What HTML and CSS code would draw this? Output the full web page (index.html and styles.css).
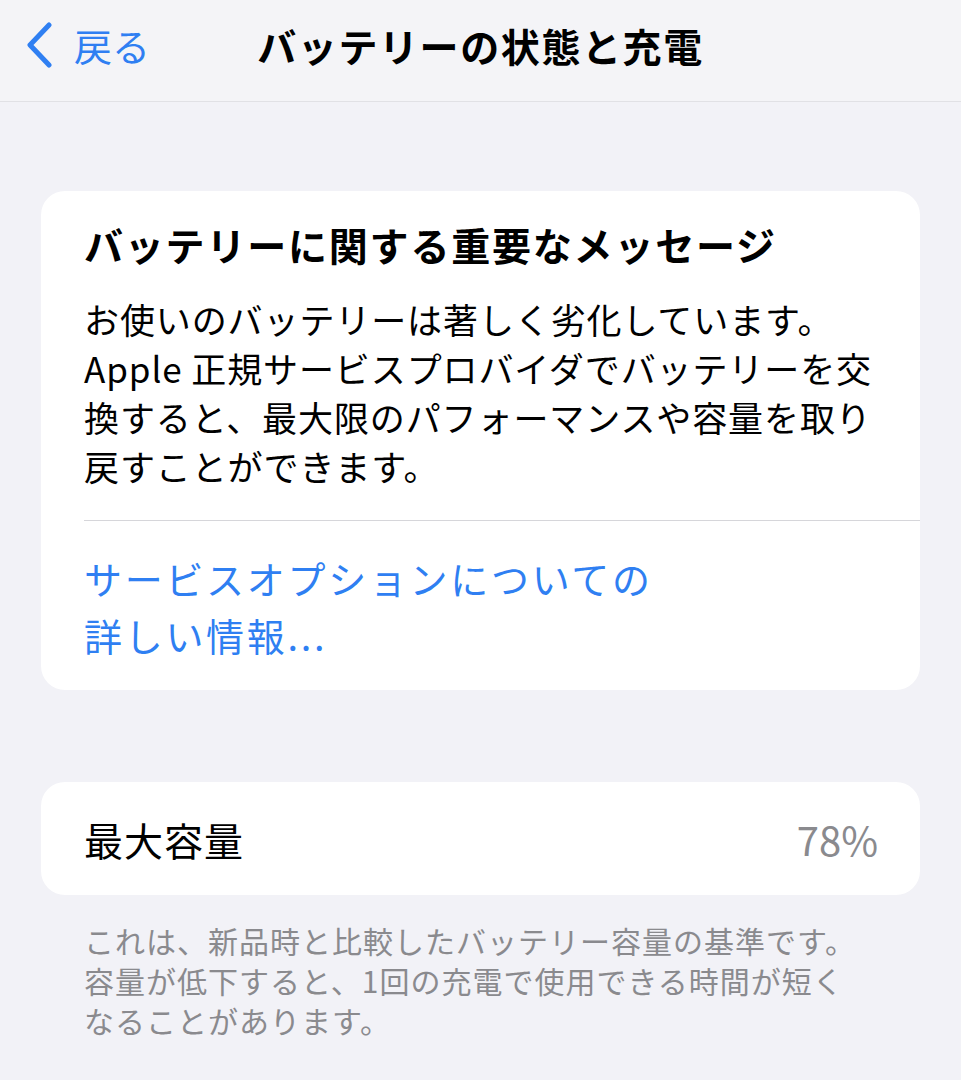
FILE: index.html
```html
<!DOCTYPE html>
<html lang="ja">
<head>
  <meta charset="UTF-8" />
  <meta name="viewport" content="width=device-width, initial-scale=1" />
  <title>バッテリーの状態と充電</title>
  <link rel="stylesheet" href="styles.css">
</head>
<body>
<div class="header">
  <a class="back" href="#">
    <svg class="chevron" width="30" height="46" viewBox="0 0 30 46">
      <path d="M25 3 L6 23 L25 43" fill="none" stroke="#2f7ff2" stroke-width="5" stroke-linecap="round" stroke-linejoin="round"/>
    </svg>
    <span>戻る</span>
  </a>
  <h1>バッテリーの状態と充電</h1>
  <div></div>
</div>

<div class="content">
  <div class="card notice">
    <div class="notice-body">
      <h2>バッテリーに関する重要なメッセージ</h2>
      <p>お使いのバッテリーは著しく劣化しています。<br>Apple 正規サービスプロバイダでバッテリーを交<br>換すると、最大限のパフォーマンスや容量を取り<br>戻すことができます。</p>
    </div>
    <div class="divider"></div>
    <a class="link" href="#">サービスオプションについての<br>詳しい情報...</a>
  </div>

  <div class="card row">
    <span class="label">最大容量</span>
    <span class="value">78%</span>
  </div>
  <p class="footnote">これは、新品時と比較したバッテリー容量の基準です。<br>容量が低下すると、1回の充電で使用できる時間が短く<br>なることがあります。</p>
</div>
</body>
</html>
```

FILE: styles.css
```css
:root {
  --ios-bg: #f2f2f7;
  --ios-blue: #2f7ff2;
  --ios-grey: #8a8a8e;
  --ios-line: #d6d6da;
}

body {
  margin: 0;
  background: var(--ios-bg);
  font-family: "Noto Sans CJK JP", "Noto Sans", sans-serif;
  color: #000;
}

.header {
  display: grid;
  grid-template-columns: 1fr auto 1fr;
  align-items: center;
  height: 102px;
  border-bottom: 1px solid #e1e1e5;
  box-sizing: border-box;
  padding-bottom: 12px;
  background: #f4f4f7;
}

.header h1 {
  margin: 0;
  font-size: 39px;
  font-weight: 700;
  letter-spacing: 1.6px;
}

.back {
  display: flex;
  align-items: center;
  gap: 20px;
  padding-left: 24px;
  color: var(--ios-blue);
  text-decoration: none;
  font-size: 38px;
}

.content {
  padding: 89px 41px 0;
}

.card {
  background: #fff;
  border-radius: 24px;
}

.notice {
  padding: 29px 0 27px 43px;
}

.notice-body {
  padding-right: 30px;
}

.notice h2 {
  margin: 0;
  font-size: 39px;
  line-height: 48px;
  font-weight: 700;
  letter-spacing: 1.8px;
}

.notice p {
  margin: 26px 0 0;
  font-size: 35px;
  line-height: 49px;
  letter-spacing: 0.9px;
}

.divider {
  height: 1px;
  background: var(--ios-line);
  margin: 30px 0 28px;
}

.link {
  display: block;
  color: var(--ios-blue);
  text-decoration: none;
  font-size: 38px;
  line-height: 57px;
  letter-spacing: 2.7px;
}

.row {
  margin-top: 92px;
  height: 113px;
  display: flex;
  align-items: center;
  justify-content: space-between;
  padding: 0 42px 0 43px;
  box-sizing: border-box;
}

.label {
  font-size: 39px;
  letter-spacing: 1px;
}

.value {
  font-size: 40px;
  color: var(--ios-grey);
}

.footnote {
  margin: 25px 0 0;
  padding-left: 43px;
  font-size: 30px;
  line-height: 40px;
  letter-spacing: 1px;
  color: var(--ios-grey);
}
```
